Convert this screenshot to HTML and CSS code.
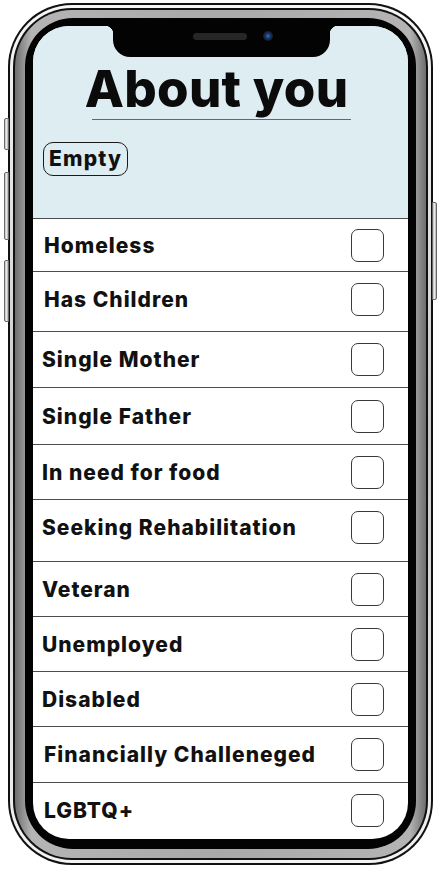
FILE: index.html
```html
<!DOCTYPE html>
<html>
<head>
    <title>About you</title>
    <meta charset="UTF-8">
    <meta name="viewport" content="width=device-width, initial-scale=1.0">
    <link rel="stylesheet" href="styles.css">
</head>
<body>
    <div class="phone">
        <span class="side-btn btn-mute"></span>
        <span class="side-btn btn-up"></span>
        <span class="side-btn btn-down"></span>
        <span class="side-btn btn-power"></span>

        <div class="rim">
            <div class="rim-inner">
                <div class="metal">
                    <div class="bezel">
                        <div class="screen">
                            <div class="notch">
                                <span class="speaker"></span>
                                <span class="camera"></span>
                            </div>

                            <div class="header">
                                <h1 class="title">About you</h1>
                                <div class="title-rule"></div>
                                <span class="badge">Empty</span>
                            </div>

                            <ul class="options">
                                <li class="option h53 inset"><span>Homeless</span><span class="check"></span></li>
                                <li class="option h60 inset"><span>Has Children</span><span class="check"></span></li>
                                <li class="option h56"><span>Single Mother</span><span class="check"></span></li>
                                <li class="option h57"><span>Single Father</span><span class="check"></span></li>
                                <li class="option h55"><span>In need for food</span><span class="check"></span></li>
                                <li class="option h62"><span>Seeking Rehabilitation</span><span class="check"></span></li>
                                <li class="option h55"><span>Veteran</span><span class="check"></span></li>
                                <li class="option h55"><span>Unemployed</span><span class="check"></span></li>
                                <li class="option h55"><span>Disabled</span><span class="check"></span></li>
                                <li class="option h56 inset"><span>Financially Challeneged</span><span class="check"></span></li>
                                <li class="option h55 inset last"><span>LGBTQ+</span><span class="check"></span></li>
                            </ul>
                        </div>
                    </div>
                </div>
            </div>
        </div>
    </div>
</body>
</html>
```

FILE: styles.css
```css
body {
    margin: 0;
    background: #fff;
    font-family: Inter, "Noto Sans", sans-serif;
}

.phone {
    position: relative;
    box-sizing: border-box;
    width: 425px;
    height: 862px;
    margin: 3px 0 0 8px;
    padding: 2px;
    border-radius: 64px;
    background: #111;
}

.side-btn {
    position: absolute;
    width: 5px;
    background: linear-gradient(90deg, #bdbdbd, #f4f4f4 60%, #9a9a9a);
    border: 1px solid #6a6a6a;
    box-sizing: border-box;
}

.btn-mute { left: -4px; top: 115px; height: 32px; border-radius: 2px 0 0 2px; }
.btn-up { left: -4px; top: 169px; height: 68px; border-radius: 2px 0 0 2px; }
.btn-down { left: -4px; top: 257px; height: 62px; border-radius: 2px 0 0 2px; }
.btn-power { right: -4px; top: 199px; height: 98px; border-radius: 0 2px 2px 0; }

.rim {
    height: 100%;
    box-sizing: border-box;
    padding: 3px;
    border-radius: 62px;
    background: linear-gradient(180deg, #f7f7f7, #c9c9c9 50%, #f3f3f3);
}

.rim-inner {
    height: 100%;
    box-sizing: border-box;
    padding: 2px;
    border-radius: 59px;
    background: #111;
}

.metal {
    height: 100%;
    box-sizing: border-box;
    padding: 8px 10px 9px 10px;
    border-radius: 57px;
    background: linear-gradient(90deg, #6e6e6e, #b4b4b4 4%, #a9a9a9 50%, #b4b4b4 96%, #6e6e6e);
}

.bezel {
    height: 100%;
    box-sizing: border-box;
    padding: 8px 8px 10px 8px;
    border-radius: 48px;
    background: #030303;
}

.screen {
    position: relative;
    height: 100%;
    overflow: hidden;
    border-radius: 36px;
    background: #fff;
}

.notch {
    position: absolute;
    top: 0;
    left: 80px;
    width: 217px;
    height: 31px;
    box-sizing: border-box;
    padding: 7px 0 0 80px;
    display: flex;
    align-items: flex-start;
    gap: 16px;
    background: #030303;
    border-radius: 0 0 17px 17px;
}

.notch::before,
.notch::after {
    content: "";
    position: absolute;
    top: 0;
    width: 8px;
    height: 8px;
}

.notch::before {
    left: -8px;
    background: radial-gradient(circle at 0 100%, transparent 8px, #030303 8.5px);
}

.notch::after {
    right: -8px;
    background: radial-gradient(circle at 100% 100%, transparent 8px, #030303 8.5px);
}

.speaker {
    width: 54px;
    height: 7px;
    border-radius: 4px;
    background: #262626;
}

.camera {
    width: 10px;
    height: 10px;
    margin-top: -2px;
    border-radius: 50%;
    background: radial-gradient(circle, #3f74c9 0, #1d3f80 2px, #15233d 4px, #1a1a1a 5px);
}

.header {
    height: 193px;
    box-sizing: border-box;
    padding: 35px 0 0 10px;
    background: #ddedf1;
    border-bottom: 1px solid #4c4c4c;
}

.title {
    margin: 0;
    padding-right: 18px;
    font-size: 51px;
    font-weight: 800;
    line-height: 56px;
    letter-spacing: 0.3px;
    text-align: center;
    white-space: nowrap;
    color: #0b0b0b;
}

.title-rule {
    width: 259px;
    height: 1px;
    margin: 2px 0 0 49px;
    background: #666;
}

.badge {
    display: inline-block;
    margin-top: 22px;
    padding: 0 5px;
    height: 34px;
    line-height: 31px;
    box-sizing: border-box;
    border: 1.5px solid #1a1a1a;
    border-radius: 10px;
    font-size: 21px;
    font-weight: 800;
    letter-spacing: 1.2px;
    color: #111;
}

.options {
    margin: 0;
    padding: 0;
    list-style: none;
}

.option {
    box-sizing: border-box;
    display: flex;
    align-items: center;
    justify-content: space-between;
    padding: 0 24px 0 9px;
    border-bottom: 1px solid #4c4c4c;
    font-size: 21px;
    font-weight: 800;
    letter-spacing: 1px;
    color: #111;
}

.option.inset { padding-left: 11px; }
.option.last { border-bottom: none; }

.option.h53 { height: 53px; }
.option.h55 { height: 55px; }
.option.h56 { height: 56px; }
.option.h57 { height: 57px; }
.option.h60 { height: 60px; padding-bottom: 4px; }
.option.h62 { height: 62px; padding-bottom: 6px; }

.check {
    width: 33px;
    height: 33px;
    box-sizing: border-box;
    border: 1.2px solid #3a3a3a;
    border-radius: 7px;
    background: #fff;
}
```
